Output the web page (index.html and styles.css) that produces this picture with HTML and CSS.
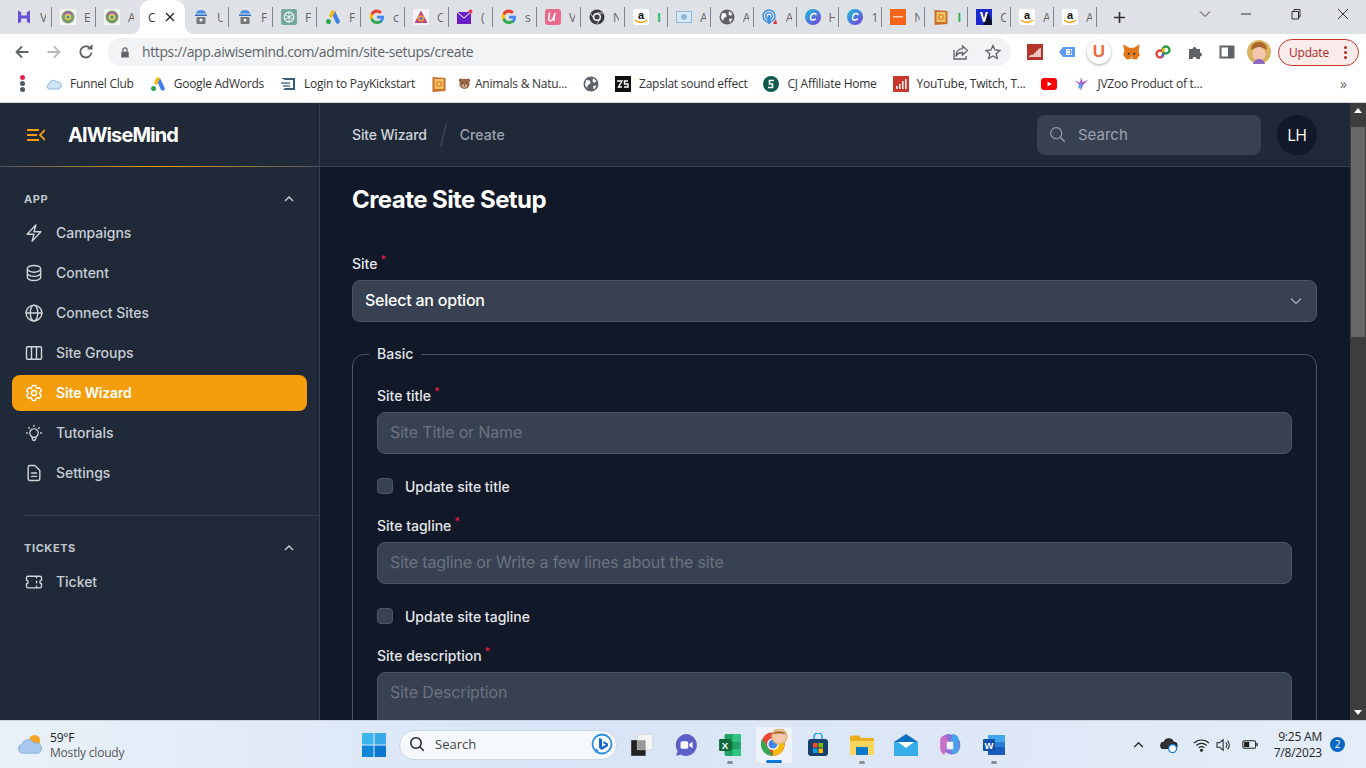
FILE: index.html
```html
<!DOCTYPE html>
<html lang="en">
<head>
<meta charset="utf-8">
<title>Create Site Setup</title>
<link rel="stylesheet" href="styles.css">
</head>
<body>
<svg class="defs" width="0" height="0" aria-hidden="true">
  <defs>
    <symbol id="i-h" viewBox="0 0 16 16"><path d="M2 1.5l3.2 1.8v3.2h5.6V3.300L14 1.500v13l-3.200-1.800V9.500H5.200v3.200L2 14.500z" fill="#6a4fd8"/></symbol>
    <symbol id="i-orb" viewBox="0 0 16 16"><rect width="16" height="16" fill="#f4f4f0"/><circle cx="8" cy="8" r="6.500" fill="#7a9a6a"/><path d="M3 6a5.500 5.500 0 0 1 10 0z" fill="#a95fb0"/><circle cx="8" cy="8" r="3.200" fill="#e6d25a"/><circle cx="8" cy="8" r="1.600" fill="#3f8f8a"/></symbol>
    <symbol id="i-lock" viewBox="0 0 16 16"><path d="M3 4.500a5 3.500 0 0 1 10 0z" fill="#4b8fe0"/><rect x="2" y="5.500" width="12" height="1.500" fill="#2c6dc0"/><rect x="3.500" y="8" width="9" height="7" rx="1" fill="#777"/><circle cx="8" cy="11" r="1.500" fill="#fff"/></symbol>
    <symbol id="i-gpt" viewBox="0 0 16 16"><rect width="16" height="16" rx="2" fill="#74aa9c"/><circle cx="8" cy="8" r="4.800" fill="none" stroke="#fff" stroke-width="1.200"/><path d="M8 3.500v9M4 5.700l8 4.600M12 5.700l-8 4.600" stroke="#fff" stroke-width=".8"/></symbol>
    <symbol id="i-ads" viewBox="0 0 16 16"><path d="M6 2.500l4-.5 5 10.500a2.300 2.300 0 0 1-4 1.500z" fill="#3f80e8"/><path d="M6 2.500a2.300 2.300 0 0 1 4 0L6.500 9.500 4 7z" fill="#f6bb13"/><circle cx="3.500" cy="12.500" r="2.500" fill="#2ea44f"/></symbol>
    <symbol id="i-g" viewBox="0 0 16 16"><path d="M15 8.200c0-.5 0-1-.1-1.400H8v2.700h4a3.400 3.400 0 0 1-1.500 2.200v1.900h2.400A7 7 0 0 0 15 8.200z" fill="#4285f4"/><path d="M8 15c2 0 3.600-.6 4.900-1.800l-2.400-1.900c-.7.400-1.500.700-2.500.700-1.900 0-3.500-1.300-4-3H1.500v1.900A7 7 0 0 0 8 15z" fill="#34a853"/><path d="M4 9a4.200 4.200 0 0 1 0-2.700V4.400H1.500a7 7 0 0 0 0 6.400z" fill="#fbbc05"/><path d="M8 3.800c1.100 0 2 .4 2.800 1.100l2.100-2.100A7 7 0 0 0 1.500 4.400L4 6.300c.5-1.500 2.100-2.500 4-2.500z" fill="#ea4335"/></symbol>
    <symbol id="i-tri" viewBox="0 0 16 16"><rect width="16" height="16" fill="#f5f2f4"/><path d="M8 1.500L14.500 14h-13z" fill="#c2407f"/><circle cx="8" cy="9.500" r="3.200" fill="#e8a33d"/><circle cx="8" cy="9.500" r="1.500" fill="#5d6bd1"/></symbol>
    <symbol id="i-mail" viewBox="0 0 16 16"><rect y="3" width="14" height="12" fill="#6a1fc9"/><path d="M0 3l7 6 7-6" fill="none" stroke="#fff" stroke-width="1"/><circle cx="13.500" cy="2.500" r="2" fill="#e8384f"/></symbol>
    <symbol id="i-u" viewBox="0 0 16 16"><rect width="16" height="16" rx="3" fill="#ea6a8c"/><path d="M4.500 4c-.5 3-1 5.500-.5 7 .5 1.300 2.500 1.200 4-1l2-6c-.7 3-1.300 6-.7 7.500" fill="none" stroke="#fff" stroke-width="1.500" stroke-linecap="round"/></symbol>
    <symbol id="i-chrome" viewBox="0 0 16 16"><circle cx="8" cy="8" r="7.500" fill="#3a3c40"/><circle cx="8" cy="8" r="4" fill="#fff"/><circle cx="8" cy="8" r="2.600" fill="#3a3c40"/><path d="M8 4h6.500M5 10L1.800 4.500M11 10l-3 5" stroke="#fff" stroke-width=".7"/></symbol>
    <symbol id="i-amz" viewBox="0 0 16 16"><rect width="16" height="16" rx="2" fill="#fff"/><text x="8" y="10" font-family="Liberation Sans" font-size="11" font-weight="700" text-anchor="middle" fill="#111">a</text><path d="M2.500 11.500c3.500 2.500 7.500 2.500 11 0" fill="none" stroke="#f90" stroke-width="1.300" stroke-linecap="round"/></symbol>
    <symbol id="i-shot" viewBox="0 0 16 16"><rect x=".5" y="2.500" width="15" height="11" fill="#d8e8f4" stroke="#8fb8dc"/><circle cx="8" cy="8" r="3" fill="#8fb8dc"/></symbol>
    <symbol id="i-globe" viewBox="0 0 16 16"><circle cx="8" cy="8" r="7.500" fill="#5f6368"/><path d="M3 4l4 .5.500 3-2.500 1.500-1 3-2-3zM10 2l3.500 3-2 2-2-1.500zM10 10l3.500-.5L11 14z" fill="#fff"/></symbol>
    <symbol id="i-pod" viewBox="0 0 16 16"><circle cx="7" cy="7" r="6" fill="none" stroke="#3b8fe0" stroke-width="1.500"/><circle cx="7" cy="7" r="3.300" fill="none" stroke="#3b8fe0" stroke-width="1.300"/><rect x="5.500" y="6" width="3" height="9" rx="1.500" fill="#3b8fe0"/><path d="M11 15l3-5 1 5z" fill="#d9333f"/></symbol>
    <symbol id="i-canva" viewBox="0 0 16 16"><defs><linearGradient id="cv" x1="0" y1="0" x2="1" y2="1"><stop offset="0" stop-color="#17c3d6"/><stop offset="1" stop-color="#7a3be0"/></linearGradient></defs><circle cx="8" cy="8" r="8" fill="url(#cv)"/><path d="M11 5.500C10 3.800 7 4.300 5.800 7c-1.200 3 .8 5.400 4.700 3.200" fill="none" stroke="#fff" stroke-width="1.500" stroke-linecap="round"/></symbol>
    <symbol id="i-org" viewBox="0 0 16 16"><rect width="16" height="16" fill="#f4641c"/><rect x="3" y="7" width="10" height="1.500" fill="#fbd2b8"/></symbol>
    <symbol id="i-book" viewBox="0 0 16 16"><path d="M1.500 1l13 1v13l-13 1z" fill="#c8702a"/><rect x="3.500" y="3" width="9" height="10" fill="#eec36a"/><circle cx="8" cy="8" r="3" fill="#e8862a"/><circle cx="8" cy="8" r="1.400" fill="#f8e08a"/></symbol>
    <symbol id="i-v" viewBox="0 0 16 16"><rect width="16" height="16" fill="#1d2ad0"/><path d="M16 16H7l5-13 4 9z" fill="#0a0f30"/><path d="M4 3h2.200L8 9.500 9.800 3H12L9 13H7z" fill="#fff"/></symbol>
    <symbol id="i-face" viewBox="0 0 24 24"><circle cx="12" cy="12" r="12" fill="#d9b25f"/><path d="M4 10c0-6 4-8 8-8s8 2 8 8c-4-3-12-3-16 0z" fill="#a8672f"/><ellipse cx="12" cy="14" rx="6.500" ry="7" fill="#f2c7ae"/><path d="M6 24c1-4 4-5 6-5s5 1 6 5z" fill="#8f68c0"/></symbol>
  </defs>
</svg>

<div class="tabstrip">
  <div class="tabs">
    <div class="tab"><svg class="fav"><use href="#i-h"/></svg><span class="tt">V</span></div>
    <div class="tab"><svg class="fav"><use href="#i-orb"/></svg><span class="tt">E</span></div>
    <div class="tab before-active"><svg class="fav"><use href="#i-orb"/></svg><span class="tt">A</span></div>
    <div class="tab active"><span class="tt act">C</span><svg class="x" viewBox="0 0 10 10"><path d="M1 1l8 8M9 1l-8 8"/></svg></div>
    <div class="tab"><svg class="fav"><use href="#i-lock"/></svg><span class="tt">U</span></div>
    <div class="tab"><svg class="fav"><use href="#i-lock"/></svg><span class="tt">F</span></div>
    <div class="tab"><svg class="fav"><use href="#i-gpt"/></svg><span class="tt">F</span></div>
    <div class="tab"><svg class="fav"><use href="#i-ads"/></svg><span class="tt">F</span></div>
    <div class="tab"><svg class="fav"><use href="#i-g"/></svg><span class="tt">c</span></div>
    <div class="tab"><svg class="fav"><use href="#i-tri"/></svg><span class="tt">C</span></div>
    <div class="tab"><svg class="fav"><use href="#i-mail"/></svg><span class="tt">(</span></div>
    <div class="tab"><svg class="fav"><use href="#i-g"/></svg><span class="tt">s</span></div>
    <div class="tab"><svg class="fav"><use href="#i-u"/></svg><span class="tt">V</span></div>
    <div class="tab"><svg class="fav"><use href="#i-chrome"/></svg><span class="tt">N</span></div>
    <div class="tab"><svg class="fav"><use href="#i-amz"/></svg><span class="tt green">I</span></div>
    <div class="tab"><svg class="fav"><use href="#i-shot"/></svg><span class="tt">A</span></div>
    <div class="tab"><svg class="fav"><use href="#i-globe"/></svg><span class="tt">A</span></div>
    <div class="tab"><svg class="fav"><use href="#i-pod"/></svg><span class="tt">A</span></div>
    <div class="tab"><svg class="fav"><use href="#i-canva"/></svg><span class="tt">H</span></div>
    <div class="tab"><svg class="fav"><use href="#i-canva"/></svg><span class="tt">1</span></div>
    <div class="tab"><svg class="fav"><use href="#i-org"/></svg><span class="tt">N</span></div>
    <div class="tab"><svg class="fav"><use href="#i-book"/></svg><span class="tt green">I</span></div>
    <div class="tab"><svg class="fav"><use href="#i-v"/></svg><span class="tt">C</span></div>
    <div class="tab"><svg class="fav"><use href="#i-amz"/></svg><span class="tt">A</span></div>
    <div class="tab"><svg class="fav"><use href="#i-amz"/></svg><span class="tt">A</span></div>
  </div>
  <svg class="newtab" viewBox="0 0 14 14"><path d="M7 1v12M1 7h12"/></svg>
  <div class="winctl">
    <svg class="wc wc-drop" viewBox="0 0 12 12"><path d="M1 3.500l5 5 5-5"/></svg>
    <svg class="wc wc-min" viewBox="0 0 12 12"><path d="M1 6h10"/></svg>
    <svg class="wc wc-max" viewBox="0 0 12 12"><path d="M2 3.500h6.500v7.500H2zM4 3.500V1.500h6v7.500H8.500"/></svg>
    <svg class="wc wc-close" viewBox="0 0 12 12"><path d="M1 1l10 10M11 1L1 11"/></svg>
  </div>
</div>

<div class="toolbar">
  <svg class="nav nav-back" viewBox="0 0 16 16"><path d="M14.500 8H2.500M8 2.500L2.500 8 8 13.500"/></svg>
  <svg class="nav nav-fwd" viewBox="0 0 16 16"><path d="M1.500 8h12M8 2.500L13.500 8 8 13.500"/></svg>
  <svg class="nav nav-reload" viewBox="0 0 16 16"><path d="M13.500 8.500A5.600 5.600 0 1 1 12 4"/><path class="solid" d="M9 5.500h5.500V0z"/></svg>
  <div class="omnibox">
    <svg class="lock" viewBox="0 0 12 14"><path class="solid" d="M1.500 6h9v7h-9z"/><path d="M3.500 6V4a2.500 2.500 0 0 1 5 0v2"/></svg>
    <span class="url">https://app.aiwisemind.com/admin/site-setups/create</span>
    <svg class="omni-i share" viewBox="0 0 16 16"><path d="M9.500 2l5 4.500-5 4.500V8.500C6 8.500 4 10 3 12.500 3 8 5.500 5 9.500 4.700z"/><path d="M1 6v9h12v-3"/></svg>
    <svg class="omni-i star" viewBox="0 0 16 16"><path d="M8 1.500l2 4.500 4.900.5-3.700 3.200 1.100 4.800L8 12l-4.300 2.500 1.100-4.800L1.100 6.500 6 6z"/></svg>
  </div>
  <div class="exts">
    <span class="ext"><svg viewBox="0 0 16 16"><rect width="16" height="16" fill="#b4332a"/><path d="M2 12l3-1.500h2V9l2-.5V7l2-.5V5l3-1v9H2z" fill="#e8c8c0"/></svg></span>
    <span class="ext"><svg viewBox="0 0 16 16"><path d="M0 8l4-5h12v10H4z" fill="#5b9bf0"/><rect x="7" y="5" width="6" height="6" fill="#fff"/><path d="M9 6v1M9 9v1M11 6h.8v4H11" stroke="#2c6dc0" fill="none"/></svg></span>
    <span class="ext ext-u"><span class="ubadge">U</span></span>
    <span class="ext ext-fox"><svg viewBox="0 0 16 16"><path d="M1 1l5 3h4l5-3-1 6 1 3-3 4-2-.5H6L4 14l-3-4 1-3z" fill="#e2761b"/><path d="M5 8l2 1-2 1zM11 8l-2 1 2 1z" fill="#233447"/><path d="M6.500 13l1.500-2 1.500 2z" fill="#d7c1b3"/></svg></span>
    <span class="ext"><svg viewBox="0 0 16 16" fill="none" stroke-width="2.400"><circle cx="5" cy="10" r="3.500" stroke="#e8453c"/><circle cx="11" cy="6" r="3.500" stroke="#2a9d4a"/><path d="M8 8l1-4" stroke="#f6bb13"/><path d="M8 10l-1 3" stroke="#3b6fe0"/></svg></span>
    <span class="ext"><svg viewBox="0 0 16 16"><path d="M2 5h3.500a2 2 0 1 1 4 0H13v3.500a2 2 0 1 1 0 4V15H9.500a2 2 0 1 0-4 0H2z" fill="#5f6368"/></svg></span>
    <span class="ext"><svg viewBox="0 0 16 16"><rect x="1.500" y="2.500" width="13" height="11" fill="none" stroke="#5f6368" stroke-width="2"/><rect x="9" y="2.500" width="5" height="11" fill="#5f6368"/></svg></span>
    <span class="ext"><svg class="ava" viewBox="0 0 24 24"><use href="#i-face"/></svg></span>
  </div>
  <div class="update"><span>Update</span><i class="dots"><b></b><b></b><b></b></i></div>
</div>

<div class="bookmarks">
  <i class="appdots"><b class="r"></b><b></b><b></b></i>
  <div class="bm"><svg viewBox="0 0 16 16"><path d="M1 11a3 3 0 0 1 2-3 4.500 4.500 0 0 1 8-2 3.500 3.500 0 0 1 4 5c-1 2-3 2-4 2H4c-2 0-3-1-3-2z" fill="#cfe3f2" stroke="#8fb8dc"/></svg><span>Funnel Club</span></div>
  <div class="bm"><svg><use href="#i-ads"/></svg><span>Google AdWords</span></div>
  <div class="bm"><svg viewBox="0 0 16 16"><path d="M1 2h14v12H3l2-2h8V4H5z" fill="#3a5a78"/><path d="M1 6h9v2H1zM3 9h7v2H3z" fill="#7a97b0"/></svg><span>Login to PayKickstart</span></div>
  <div class="bm"><svg><use href="#i-book"/></svg></div>
  <div class="bm bm-tight"><svg class="bear" viewBox="0 0 14 14"><circle cx="3" cy="3.500" r="2" fill="#8a5a3c"/><circle cx="11" cy="3.500" r="2" fill="#8a5a3c"/><circle cx="7" cy="7.500" r="5.500" fill="#9c6a48"/><ellipse cx="7" cy="9.500" rx="2.800" ry="2.200" fill="#d8b090"/><circle cx="5" cy="6.500" r=".7" fill="#222"/><circle cx="9" cy="6.500" r=".7" fill="#222"/><circle cx="7" cy="8.800" r=".8" fill="#222"/></svg><span>Animals &amp; Natu...</span></div>
  <div class="bm"><svg><use href="#i-globe"/></svg></div>
  <div class="bm"><svg viewBox="0 0 16 16"><rect width="16" height="16" fill="#111"/><path d="M2 5h5L3.500 11H7M13 5H9.500v3H13v3H9" fill="none" stroke="#fff" stroke-width="1.400"/></svg><span>Zapslat sound effect</span></div>
  <div class="bm"><svg viewBox="0 0 16 16"><circle cx="8" cy="8" r="8" fill="#0f5a4c"/><path d="M11 4.500H6.500v3.500h3v3.500H5" fill="none" stroke="#fff" stroke-width="1.600"/></svg><span>CJ Affiliate Home</span></div>
  <div class="bm"><svg viewBox="0 0 16 16"><rect width="16" height="16" fill="#c8372d"/><path d="M3 10h1.500v3H3zM6 8h1.500v5H6zM9 5h1.500v8H9zM12 3h1.500v10H12z" fill="#fff"/></svg><span>YouTube, Twitch, T...</span></div>
  <div class="bm"><svg viewBox="0 0 16 16"><rect y="2" width="16" height="12" rx="3" fill="#f00"/><path d="M6.500 5.500v5L11 8z" fill="#fff"/></svg></div>
  <div class="bm"><svg viewBox="0 0 16 16"><path d="M2 4l5 3 1-6 1.500 5L15 4l-5 5-2 6-1-5z" fill="#a65fd8"/><path d="M5 10l3-2 1 2-3 3z" fill="#3fb8e0"/></svg><span>JVZoo Product of t...</span></div>
  <span class="more">»</span>
</div>

<div class="app">
  <aside class="sidebar">
    <div class="brand">
      <svg class="burger" viewBox="0 0 18 12"><path d="M0 1h12M0 6h10M0 11h12M18 1l-5 5 5 5"/></svg>
      <span class="brand-name">AIWiseMind</span>
    </div>
    <nav class="nav-sec nav-app">
      <div class="sec-head"><span>APP</span><svg viewBox="0 0 10 6"><path d="M1 5l4-4 4 4"/></svg></div>
      <ul class="menu">
        <li class="item"><svg viewBox="0 0 24 24"><path d="M3.750 13.500l10.500-11.250L12 10.500h8.250L9.750 21.750 12 13.500H3.750z"/></svg><span>Campaigns</span></li>
        <li class="item"><svg viewBox="0 0 24 24"><path d="M4 7v10c0 2.210 3.582 4 8 4s8-1.790 8-4V7M4 7c0 2.210 3.582 4 8 4s8-1.790 8-4M4 7c0-2.210 3.582-4 8-4s8 1.790 8 4m0 5c0 2.210-3.582 4-8 4s-8-1.790-8-4"/></svg><span>Content</span></li>
        <li class="item"><svg viewBox="0 0 24 24"><circle cx="12" cy="12" r="9.500"/><ellipse cx="12" cy="12" rx="4.500" ry="9.500"/><path d="M2.500 12h19"/></svg><span>Connect Sites</span></li>
        <li class="item"><svg viewBox="0 0 24 24"><path d="M9 4.500v15m6-15v15m-10.875 0h15.750c.621 0 1.125-.504 1.125-1.125V5.625c0-.621-.504-1.125-1.125-1.125H4.125C3.504 4.500 3 5.004 3 5.625v12.750c0 .621.504 1.125 1.125 1.125z"/></svg><span>Site Groups</span></li>
        <li class="item on"><svg viewBox="0 0 24 24"><path d="M9.594 3.940c.09-.542.56-.94 1.110-.94h2.593c.55 0 1.020.398 1.110.94l.213 1.281c.063.374.313.686.645.870.074.04.147.083.22.127.324.196.72.257 1.075.124l1.217-.456a1.125 1.125 0 011.370.49l1.296 2.247a1.125 1.125 0 01-.26 1.431l-1.003.827c-.293.24-.438.613-.431.992a6.759 6.759 0 010 .255c-.007.378.138.75.43.99l1.005.828c.424.35.534.954.26 1.430l-1.298 2.247a1.125 1.125 0 01-1.369.491l-1.217-.456c-.355-.133-.75-.072-1.076.124a6.570 6.570 0 01-.22.128c-.331.183-.581.495-.644.869l-.213 1.280c-.09.543-.56.941-1.110.941h-2.594c-.55 0-1.020-.398-1.110-.94l-.213-1.281c-.062-.374-.312-.686-.644-.870a6.520 6.520 0 01-.22-.127c-.325-.196-.72-.257-1.076-.124l-1.217.456a1.125 1.125 0 01-1.369-.49l-1.297-2.247a1.125 1.125 0 01.26-1.431l1.004-.827c.292-.24.437-.613.43-.992a6.932 6.932 0 010-.255c.007-.378-.138-.75-.43-.99l-1.004-.828a1.125 1.125 0 01-.26-1.430l1.297-2.247a1.125 1.125 0 011.370-.491l1.216.456c.356.133.751.072 1.076-.124.072-.044.146-.087.22-.128.332-.183.582-.495.644-.869l.214-1.281z"/><path d="M15 12a3 3 0 11-6 0 3 3 0 016 0z"/></svg><span>Site Wizard</span></li>
        <li class="item"><svg viewBox="0 0 24 24"><path d="M9.663 17h4.673M12 3v1m6.364 1.636l-.707.707M21 12h-1M4 12H3m3.343-5.657l-.707-.707m2.828 9.900a5 5 0 117.072 0l-.548.547A3.374 3.374 0 0014 18.469V19a2 2 0 11-4 0v-.531c0-.895-.356-1.754-.988-2.386l-.548-.547z"/></svg><span>Tutorials</span></li>
        <li class="item"><svg viewBox="0 0 24 24"><path d="M9 12h6m-6 4h6m2 5H7a2 2 0 01-2-2V5a2 2 0 012-2h5.586a1 1 0 01.707.293l5.414 5.414a1 1 0 01.293.707V19a2 2 0 01-2 2z"/></svg><span>Settings</span></li>
      </ul>
    </nav>
    <nav class="nav-sec nav-tickets">
      <div class="sec-head"><span>TICKETS</span><svg viewBox="0 0 10 6"><path d="M1 5l4-4 4 4"/></svg></div>
      <ul class="menu">
        <li class="item"><svg viewBox="0 0 24 24"><path d="M15 5v2m0 4v2m0 4v2M5 5a2 2 0 00-2 2v3a2 2 0 110 4v3a2 2 0 002 2h14a2 2 0 002-2v-3a2 2 0 110-4V7a2 2 0 00-2-2H5z"/></svg><span>Ticket</span></li>
      </ul>
    </nav>
  </aside>

  <div class="content">
    <header class="topbar">
      <div class="crumbs"><span class="crumb-a">Site Wizard</span><i class="slash"></i><span class="crumb-b">Create</span></div>
      <div class="gsearch"><svg viewBox="0 0 20 20"><circle cx="8.500" cy="8.500" r="6.500"/><path d="M13.500 13.500l5 5"/></svg><span>Search</span></div>
      <div class="avatar">LH</div>
    </header>
    <main class="page">
      <h1>Create Site Setup</h1>
      <label class="lbl lbl-site">Site<sup>*</sup></label>
      <div class="select"><span>Select an option</span><svg viewBox="0 0 12 8"><path d="M1 1.500l5 5 5-5"/></svg></div>
      <fieldset class="group">
        <legend>Basic</legend>
        <label class="lbl">Site title<sup>*</sup></label>
        <div class="input">Site Title or Name</div>
        <div class="check"><i class="box"></i><span>Update site title</span></div>
        <label class="lbl">Site tagline<sup>*</sup></label>
        <div class="input">Site tagline or Write a few lines about the site</div>
        <div class="check"><i class="box"></i><span>Update site tagline</span></div>
        <label class="lbl">Site description<sup>*</sup></label>
        <div class="input area">Site Description</div>
      </fieldset>
    </main>
  </div>

  <div class="scrollbar">
    <i class="sb-up"></i>
    <i class="sb-thumb"></i>
    <i class="sb-down"></i>
  </div>
</div>

<footer class="taskbar">
  <div class="weather">
    <svg viewBox="0 0 28 24"><circle cx="18" cy="7" r="6" fill="#f5a524"/><path d="M5 21a5 5 0 0 1-1-9.800A7 7 0 0 1 17 10a5.500 5.500 0 0 1 5 11z" fill="#a9c8ee" stroke="#7ea6da" stroke-width=".8"/></svg>
    <div class="w-txt"><b>59°F</b><span>Mostly cloudy</span></div>
  </div>
  <div class="center">
    <svg class="win" viewBox="0 0 24 24"><path d="M0 0h11.500v11.500H0z" fill="#3fb5ee"/><path d="M12.500 0H24v11.500H12.500z" fill="#38aaea"/><path d="M0 12.500h11.500V24H0z" fill="#0f86d8"/><path d="M12.500 12.500H24V24H12.500z" fill="#0a78d0"/></svg>
    <div class="tsearch">
      <svg class="mag" viewBox="0 0 16 16"><circle cx="7" cy="7" r="5.200"/><path d="M10.800 10.800l4 4"/></svg>
      <span>Search</span>
      <svg class="bing" viewBox="0 0 22 22"><circle cx="11" cy="11" r="9.500" fill="#fff" stroke="#2b8fe8" stroke-width="1.800"/><path d="M4 20l1-5 3 3z" fill="#2b8fe8"/><path d="M8 5l3 1v8l4-2.500-2.500-1L12 8l5 2.500v2.500l-6 4-3-2z" fill="#1368c8"/></svg>
    </div>
    <div class="tb-i"><svg viewBox="0 0 20 20"><rect x="1" y="6" width="12" height="13" fill="#222"/><rect x="6" y="1" width="13" height="13" fill="#f4f4f4" stroke="#ccc" stroke-width=".5"/><rect x="6" y="6" width="7" height="8" fill="#999"/></svg></div>
    <div class="tb-i"><svg viewBox="0 0 22 22"><path d="M11 1a10 10 0 1 1-5 18.700L2 21l1.300-4.500A10 10 0 0 1 11 1z" fill="#5b5fc7"/><rect x="6" y="7.500" width="7" height="7" rx="1.500" fill="#fff"/><path d="M14 10l3-2v6l-3-2z" fill="#fff"/></svg></div>
    <div class="tb-i dot"><svg viewBox="0 0 22 22"><rect x="6" y="1" width="15" height="20" rx="1.500" fill="#21a366"/><path d="M13.500 1H21v7h-7.500zM13.500 15H21v6h-7.500z" fill="#33c481"/><path d="M6 8h7.500v7H6z" fill="#107c41"/><rect x="1" y="5.500" width="11" height="11" rx="1" fill="#0e6a38"/><text x="6.500" y="14.500" font-family="Liberation Sans" font-size="9" font-weight="700" fill="#fff" text-anchor="middle">X</text></svg></div>
    <div class="tb-i cur"><svg class="big" viewBox="0 0 26 26"><circle cx="12" cy="14" r="11" fill="#e8453c"/><path d="M12 25A11 11 0 0 1 2 9l6 9 4 7z" fill="#34a853"/><path d="M12 25a11 11 0 0 0 9.500-16H12z" fill="#fbbc05"/><circle cx="12" cy="14" r="5.500" fill="#fff"/><circle cx="12" cy="14" r="4.200" fill="#4285f4"/><circle cx="18" cy="7" r="7" fill="#f2c7ae" stroke="#d9b25f" stroke-width="1.200"/><path d="M12 5c1-4 10-4 12 0-3-1-9-1-12 0z" fill="#a8672f"/></svg></div>
    <div class="tb-i"><svg viewBox="0 0 22 24"><path d="M7 7V4a4 4 0 0 1 8 0v3" fill="none" stroke="#2ba8e0" stroke-width="1.600"/><rect x="1" y="6" width="20" height="17" rx="3" fill="#16416e"/><rect x="6" y="10" width="4.500" height="4.500" fill="#f25022"/><rect x="11.500" y="10" width="4.500" height="4.500" fill="#7fba00"/><rect x="6" y="15.500" width="4.500" height="4.500" fill="#00a4ef"/><rect x="11.500" y="15.500" width="4.500" height="4.500" fill="#ffb900"/></svg></div>
    <div class="tb-i dot"><svg viewBox="0 0 24 22"><path d="M0 3a1.500 1.500 0 0 1 1.500-1.500H9L11 4h13v17H0z" fill="#e8b020"/><path d="M0 7h24v14H0z" fill="#fcd65c"/><rect x="6" y="13" width="12" height="8" rx="1" fill="#0a78c8"/></svg></div>
    <div class="tb-i"><svg viewBox="0 0 24 22"><path d="M0 8l12-8 12 8v14H0z" fill="#0f6fc0"/><path d="M0 8h24v14H0z" fill="#33aee8"/><path d="M4 8h16l-8 6z" fill="#fff"/></svg></div>
    <div class="tb-i"><svg viewBox="0 0 22 22"><path d="M6 2c3-2 7-1 9 1l4 3c2 2 2 8 0 10-2 3-6 5-9 3L5 17C2 14 2 5 6 2z" fill="#8a6fd8"/><path d="M13 1c3 0 6 2 6 5v9c0 3-3 5-6 4l-1-6 3-2-3-3z" fill="#45a4e8"/><path d="M6 20c-3-1-4-4-4-6V7c0-3 2-5 5-5l2 5-2 8z" fill="#c870c8"/><path d="M8 8h6v7H8z" fill="#eef2fa"/></svg></div>
    <div class="tb-i dot"><svg viewBox="0 0 24 22"><rect x="6" y="1" width="17" height="20" rx="1" fill="#41a5ee"/><path d="M6 8h17v5H6z" fill="#2b7cd3"/><path d="M6 13h17v8H6z" fill="#185abd"/><rect x="1" y="5" width="12" height="12" rx="1" fill="#114fa8"/><text x="7" y="14.500" font-family="Liberation Sans" font-size="9.500" font-weight="700" fill="#fff" text-anchor="middle">W</text></svg></div>
  </div>
  <div class="tray">
    <svg class="t-chev" viewBox="0 0 12 8"><path d="M1 7l5-5 5 5"/></svg>
    <svg class="t-cloud" viewBox="0 0 20 18"><path d="M4 13a3.500 3.500 0 0 1 .5-7A5.500 5.500 0 0 1 15 6a3.500 3.500 0 0 1 1 7z" fill="#333"/><circle cx="14" cy="13" r="4.500" fill="#fff" stroke="#0a78d0" stroke-width="1.400"/></svg>
    <svg class="t-wifi" viewBox="0 0 18 14"><path d="M1 5a11.500 11.500 0 0 1 16 0M3.500 7.500a8 8 0 0 1 11 0M6 10a4.500 4.500 0 0 1 6 0"/><circle cx="9" cy="12.500" r="1" fill="#222"/></svg>
    <svg class="t-vol" viewBox="0 0 18 16"><path d="M1 5.500h3L8 2v12l-4-3.500H1zM11 5a4 4 0 0 1 0 6M13 3a7 7 0 0 1 0 10"/></svg>
    <svg class="t-bat" viewBox="0 0 20 12"><rect x="1" y="1.500" width="15" height="9" rx="2"/><rect class="f" x="2.500" y="3" width="6" height="6"/><rect class="f" x="17" y="4" width="1.500" height="4"/></svg>
    <div class="clock"><span>9:25 AM</span><span>7/8/2023</span></div>
    <span class="badge">2</span>
  </div>
</footer>
</body>
</html>
```

FILE: styles.css
```css
* { box-sizing: border-box; }
html, body { margin: 0; height: 100%; }
body {
  width: 1366px; height: 768px; overflow: hidden;
  display: flex; flex-direction: column;
  font-family: "Inter", "Liberation Sans", sans-serif;
  background: #fff;
}
.defs { position: absolute; }
ul { list-style: none; margin: 0; padding: 0; }
i { display: block; font-style: normal; }

/* tab strip */
.tabstrip { height: 34px; background: #dee1e6; display: flex; align-items: flex-end; flex: none; }
.tabs { display: flex; padding-left: 8px; height: 34px; }
.tab {
  width: 44px; height: 34px; display: flex; align-items: center; gap: 8px;
  padding: 0 0 0 8px; position: relative; flex: none;
  font: 12px "Open Sans", sans-serif; color: #666;
}
.tab:nth-child(n+15) { width: 42.9px; }
.tab::after { content: ""; position: absolute; right: 0; top: 7px; height: 20px; width: 1px; background: #80868b; }
.tab.before-active::after { display: none; }
.tab.active { width: 45px; background: #fff; border-radius: 10px 10px 0 0; gap: 9px; }
.tab.active::before, .tab.active::after {
  content: ""; position: absolute; top: auto; bottom: 0; width: 8px; height: 8px;
}
.tab.active::before { left: -8px; background: radial-gradient(circle at 0 0, transparent 7.5px, #fff 8px); }
.tab.active::after { right: -8px; background: radial-gradient(circle at 100% 0, transparent 7.5px, #fff 8px); }
.fav { width: 16px; height: 16px; flex: none; }
.tt { width: 6px; overflow: hidden; white-space: nowrap; display: block; }
.tt.act { color: #333; width: 8px; }
.tt.green { color: #1fb56a; font-weight: 700; }
.x { width: 10px; height: 10px; fill: none; stroke: #222; stroke-width: 1.300; flex: none; }
.newtab { width: 13px; height: 13px; margin: 0 0 10px 16px; fill: none; stroke: #333; stroke-width: 1.800; flex: none; }
.winctl { margin-left: auto; display: flex; align-self: stretch; align-items: center; padding-bottom: 6px; }
.wc { width: 12px; height: 12px; fill: none; stroke: #333; stroke-width: 1; flex: none; }
.wc-drop { margin-right: 29px; }
.wc-min { margin-right: 38px; }
.wc-max { margin-right: 35px; }
.wc-close { margin-right: 17px; }

/* toolbar */
.toolbar { height: 34px; flex: none; background: #fff; display: flex; align-items: center; padding: 2px 0 0 14px; }
.nav { width: 16px; height: 16px; fill: none; stroke: #5f6368; stroke-width: 1.800; flex: none; margin-right: 16px; }
.nav-fwd { stroke: #b6b9bd; }
.nav .solid { fill: #5f6368; stroke: none; }
.omnibox {
  width: 903px; height: 28px; margin-left: -2px; border-radius: 14px; background: #f1f3f4;
  display: flex; align-items: center; padding: 0 10px 0 12px; flex: none;
}
.lock { width: 10px; height: 13px; fill: none; stroke: #5f6368; stroke-width: 1.500; flex: none; }
.lock .solid { fill: #5f6368; stroke: none; }
.url { margin-left: 12px; font: 14px/28px "Open Sans", sans-serif; color: #5f6368; letter-spacing: -.38px; white-space: nowrap; }
.omni-i { width: 16px; height: 16px; fill: none; stroke: #5f6368; stroke-width: 1.300; flex: none; }
.share { margin-left: auto; }
.star { margin-left: 16px; }
.exts { display: flex; margin-left: 8px; flex: none; }
.ext { width: 32px; height: 30px; display: flex; align-items: center; justify-content: center; flex: none; }
.ext svg { width: 16px; height: 16px; }
.ext.ext-fox svg { width: 19px; height: 19px; }
.ext .ava { width: 24px; height: 24px; }
.ubadge {
  width: 24px; height: 24px; border-radius: 50%; background: #fff; box-shadow: 0 1px 3px rgba(0,0,0,.35);
  color: #ec6b3c; font: 700 17px/24px "Liberation Sans", sans-serif; text-align: center;
}
.update {
  width: 81px; height: 27px; margin-left: 3px; border: 1px solid #c5372c; border-radius: 14px; background: #f9ebea;
  display: flex; align-items: center; padding: 0 0 0 10px; flex: none;
  font: 12px "Open Sans", sans-serif; color: #b3261e; letter-spacing: -.2px;
}
.dots { margin-left: auto; margin-right: 11px; display: flex; flex-direction: column; gap: 2px; }
.dots b { width: 3px; height: 3px; border-radius: 50%; background: #b3261e; display: block; }

/* bookmarks */
.bookmarks {
  height: 35px; flex: none; background: #fff; border-bottom: 1px solid #d7d9dc;
  display: flex; align-items: center; padding: 0 0 3px 17px; gap: 16px;
  font: 12px "Open Sans", sans-serif; color: #333;
}
.appdots { display: flex; flex-direction: column; gap: 1px; width: 10px; margin-right: 3px; align-items: center; }
.appdots b { width: 5px; height: 5px; border-radius: 50%; background: #4a5a64; display: block; }
.appdots b.r { background: #e8234a; }
.bm { display: flex; align-items: center; gap: 8px; white-space: nowrap; letter-spacing: -.25px; flex: none; }
.bm svg { width: 16px; height: 16px; flex: none; }
.bm-tight { gap: 4px; margin-left: -5px; }
.bm-tight svg.bear { width: 13px; height: 13px; }
.more { margin-left: auto; margin-right: 19px; font-size: 14px; line-height: 14px; color: #5f6368; }

/* app */
.app { height: 617px; flex: none; display: flex; background: #111827; overflow: hidden; }
.sidebar { width: 320px; flex: none; background: #1f2937; border-right: 1px solid #374151; }
.brand {
  height: 64px; display: flex; align-items: center; padding-left: 27px; position: relative;
}
.brand::after {
  content: ""; position: absolute; left: 0; right: 0; bottom: 0; height: 1px;
  background: linear-gradient(90deg, #4b5563 0%, #f59e0b 50%, #4b5563 100%);
}
.burger { width: 18px; height: 12px; fill: none; stroke: #f59e0b; stroke-width: 1.800; flex: none; }
.brand-name { margin-left: 23px; font-size: 20px; font-weight: 700; color: #fff; letter-spacing: -.9px; }
.nav-sec { padding: 0 12px; }
.nav-app { padding-top: 22px; padding-bottom: 25px; position: relative; }
.nav-app::after { content: ""; position: absolute; left: 24px; right: 0; bottom: 0; height: 1px; background: #374151; }
.nav-tickets { padding-top: 22px; }
.sec-head {
  height: 20px; display: flex; align-items: center; justify-content: space-between; padding: 0 13px 0 12px; margin-bottom: 6px;
  font-size: 11px; font-weight: 700; color: #c2c7cf; letter-spacing: .6px;
}
.sec-head svg { width: 10px; height: 6px; fill: none; stroke: #d1d5db; stroke-width: 1.300; }
.menu { display: flex; flex-direction: column; gap: 4px; width: 295px; }
.item {
  height: 36px; display: flex; align-items: center; gap: 12px; padding: 0 12px; border-radius: 8px;
  font-size: 14px; font-weight: 500; color: #c9ced6; letter-spacing: -.03px;
}
.item span { margin-bottom: 1px; }
.item svg { width: 20px; height: 20px; fill: none; stroke: #d1d5db; stroke-width: 1.700; stroke-linecap: round; stroke-linejoin: round; flex: none; }
.item.on { background: #f59e0b; color: #fff; font-weight: 600; letter-spacing: -.15px; }
.item.on svg { stroke: #fff; }

/* content */
.content { flex: 1; min-width: 0; display: flex; flex-direction: column; }
.topbar {
  height: 64px; flex: none; background: #1f2937; border-bottom: 1px solid #374151;
  display: flex; align-items: center; padding: 0 33px 0 32px;
  font-size: 14px;
}
.crumbs { display: flex; align-items: center; flex: 1; }
.crumb-a { color: #d1d5db; font-weight: 500; letter-spacing: -.15px; }
.crumb-b { color: #9ca3af; font-weight: 500; letter-spacing: .1px; }
.slash { width: 1px; height: 24px; background: #4b5563; transform: rotate(14deg); margin: 0 16px; }
.gsearch {
  width: 224px; height: 40px; border-radius: 8px; background: #374151; display: flex; align-items: center;
  padding-left: 12px; gap: 12px; color: #9ca3af; font-size: 15px; letter-spacing: 0;
}
.gsearch svg { width: 17px; height: 17px; fill: none; stroke: #9ca3af; stroke-width: 1.400; }
.avatar {
  width: 40px; height: 40px; margin-left: 16px; border-radius: 50%; background: #111827; color: #fff;
  display: flex; align-items: center; justify-content: center; font: 16px "Open Sans", sans-serif; letter-spacing: -.3px;
}
.page { flex: 1; min-height: 0; overflow: hidden; padding: 17px 33px 0 32px; }
h1 { margin: 0; font-size: 24px; line-height: 32px; font-weight: 700; color: #fff; letter-spacing: -.56px; }
.lbl { display: block; font-size: 14px; line-height: 20px; font-weight: 500; color: #e5e7eb; letter-spacing: 0; height: 20px; }
.lbl sup { color: #e11d48; font-size: 11px; line-height: 0; margin-left: 3px; }
.lbl-site { margin-top: 38px; margin-bottom: 6px; }
.select {
  height: 42px; border: 1px solid #4b5563; border-radius: 8px; background: #374151;
  display: flex; align-items: center; justify-content: space-between; padding: 0 14px 2px 12px;
  color: #fff; font-size: 16px; font-weight: 500; letter-spacing: -.23px;
}
.select svg { width: 12px; height: 8px; fill: none; stroke: #9ca3af; stroke-width: 1.500; margin-top: 2px; }
.group {
  margin: 22px 0 0; padding: 22px 24px 0; min-width: 0; border: 1px solid #4b5563; border-radius: 12px;
}
legend { padding: 0 8px; margin-left: -8px; font-size: 14px; line-height: 20px; font-weight: 500; color: #e5e7eb; }
.group .lbl { margin-bottom: 6px; }
.input {
  height: 42px; border: 1px solid #4b5563; border-radius: 8px; background: #374151; color: #6b7280;
  display: flex; align-items: center; padding: 0 12px 2px; font-size: 16px; letter-spacing: -.14px;
}
.input.area { height: 100px; align-items: flex-start; padding-top: 9px; }
.check {
  display: flex; align-items: center; gap: 12px; height: 20px; margin: 22px 0 20px;
  font-size: 14px; font-weight: 500; color: #e5e7eb;
}
.box { width: 16px; height: 16px; border-radius: 4px; background: #374151; border: 1px solid #4b5563; }

/* scrollbar */
.scrollbar { width: 16px; flex: none; background: #3d3d3d; position: relative; }
.sb-up { position: absolute; left: 4px; top: 5px; border: 4px solid transparent; border-top: 0; border-bottom: 5px solid #fff; }
.sb-down { position: absolute; left: 4px; bottom: 5px; border: 4px solid transparent; border-bottom: 0; border-top: 5px solid #fff; }
.sb-thumb { position: absolute; left: 1px; right: 1px; top: 24px; height: 210px; background: #686868; }

/* taskbar */
.taskbar {
  height: 48px; flex: none; display: flex; align-items: center;
  background: linear-gradient(90deg, #e9f1f8 0%, #d8e4f7 40%, #dde7f6 70%, #e4edf8 100%);
  border-top: 1px solid #c9d3de; font-family: "Open Sans", sans-serif;
}
.weather { width: 362px; flex: none; display: flex; align-items: center; padding-left: 18px; gap: 6px; }
.weather svg { width: 26px; height: 22px; flex: none; }
.w-txt { display: flex; flex-direction: column; font-size: 12px; line-height: 15px; letter-spacing: -.2px; }
.w-txt b { font-weight: 400; color: #1a1a1a; }
.w-txt span { color: #555; }
.center { display: flex; align-items: center; }
.win { width: 24px; height: 24px; flex: none; margin-right: 13px; }
.tsearch {
  width: 218px; height: 30px; border-radius: 15px; background: #f5f8fd; border: 1px solid #cbd5e5; margin-right: 3px;
  display: flex; align-items: center; padding: 0 0 1px 9px; gap: 10px; font-size: 13px; color: #444; position: relative;
}
.mag { width: 16px; height: 16px; fill: none; stroke: #222; stroke-width: 1.500; flex: none; }
.bing { width: 22px; height: 22px; margin-left: auto; margin-right: 3px; flex: none; }
.tb-i { width: 44px; height: 38px; display: flex; align-items: center; justify-content: center; position: relative; flex: none; }
.tb-i svg { width: 24px; height: 24px; }
.tb-i svg.big { width: 28px; height: 28px; margin-top: -4px; }
.tb-i.dot::after { content: ""; position: absolute; bottom: 0; left: 19px; width: 6px; height: 3px; border-radius: 2px; background: #8a8f96; }
.tb-i.cur { width: 38px; margin: 0 3px; background: #eef3fb; border-radius: 4px; box-shadow: inset 0 0 0 1px #dfe6f0; }
.tb-i.cur::after { content: ""; position: absolute; bottom: 1px; left: 11px; width: 16px; height: 3px; border-radius: 2px; background: #0a78d0; }
.tray { margin-left: auto; display: flex; align-items: center; padding-right: 21px; }
.tray svg { fill: none; stroke: #222; stroke-width: 1.200; flex: none; }
.t-chev { width: 11px; height: 7px; margin-right: 16px; stroke-width: 1.600 !important; }
.t-cloud { width: 18px; height: 16px; margin-right: 15px; }
.t-wifi { width: 17px; height: 14px; margin-right: 6px; }
.t-vol { width: 16px; height: 14px; margin-right: 10px; }
.t-bat { width: 17px; height: 11px; margin-right: 8px; }
.t-bat .f { fill: #222; stroke: none; }
.clock { display: flex; flex-direction: column; align-items: flex-end; font-size: 12px; line-height: 16px; color: #222; letter-spacing: -.2px; width: 55px; }
.badge {
  width: 15px; height: 15px; border-radius: 50%; background: #0a67c2; color: #fff; font-size: 10px; line-height: 15px; text-align: center; margin-left: 8px;
}
```
